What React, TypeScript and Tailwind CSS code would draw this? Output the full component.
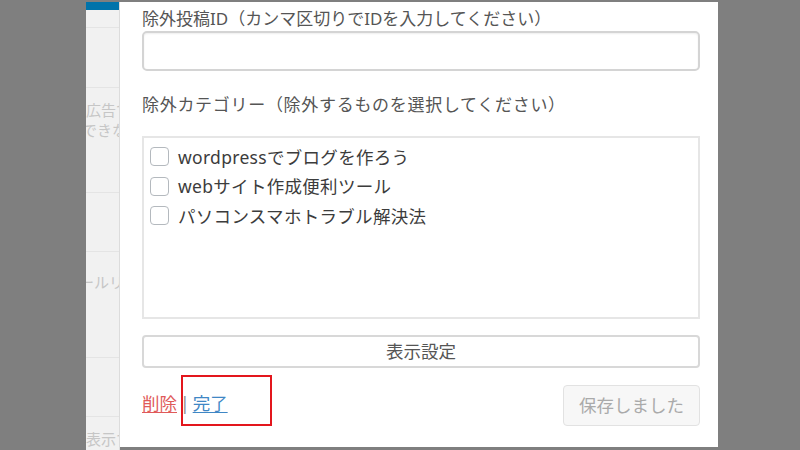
import React from 'react';

const categories = ['wordpressでブログを作ろう', 'webサイト作成便利ツール', 'パソコンスマホトラブル解決法'];

const SideStrip: React.FC = () => (
  <div className="w-[34px] shrink-0 h-full overflow-hidden bg-[#f1f1f1] border-r border-[#dcdcdc] flex flex-col text-[15px] leading-[20px] text-[#c6c6c6] whitespace-nowrap">
    <div className="h-[8px] bg-[#0073aa]" />
    <div className="h-[18px] border-b border-[#e4e4e4]" />
    <div className="h-[60px] border-b border-[#e4e4e4]" />
    <div className="h-[105px] border-b border-[#e4e4e4] pt-[12px]">
      <div>広告で</div>
      <div className="-ml-[4px]">できな</div>
    </div>
    <div className="h-[59px] border-b border-[#e4e4e4]" />
    <div className="h-[106px] border-b border-[#e4e4e4] pt-[20px]">
      <div className="-ml-[7px]">ールリス</div>
    </div>
    <div className="h-[59px] border-b border-[#e4e4e4]" />
    <div className="pt-[12px]">表示す</div>
  </div>
);

const Checkbox: React.FC<{ label: string }> = ({ label }) => (
  <label className="flex items-center h-[29.5px]">
    <span className="w-[19px] h-[19px] rounded-[4px] border-[1.5px] border-[#b4b9be] bg-white shrink-0" />
    <span className="ml-[9px] text-[17.5px] tracking-[0.3px] text-[#3c3c3c]">{label}</span>
  </label>
);

export default function App() {
  return (
    <div
      className="w-[800px] h-[450px] bg-[#7f7f7f] flex pt-[2px] overflow-hidden"
      style={{ fontFamily: '"Noto Sans", "Noto Sans CJK JP", sans-serif' }}
    >
      <div className="w-[86px] shrink-0" />
      <SideStrip />
      <div className="w-[598px] h-[445px] bg-white shrink-0 pl-[22px] pr-[18px] flex flex-col">
        <div className="mt-[6px] text-[17px] leading-[22px] text-[#555]">除外投稿ID（カンマ区切りでIDを入力してください）</div>
        <div className="mt-[1px] h-[40px] rounded-[5px] border-2 border-[#d4d4d4] shadow-[inset_0_1px_2px_rgba(0,0,0,0.07)]" />
        <div className="mt-[23px] text-[17px] leading-[22px] tracking-[0.7px] text-[#555]">除外カテゴリー（除外するものを選択してください）</div>
        <div className="mt-[20px] h-[183px] border-2 border-[#e6e6e6] pl-[6px] pt-[4px]">
          {categories.map((c) => (
            <Checkbox key={c} label={c} />
          ))}
        </div>
        <div className="mt-[16px] h-[33px] rounded-[4px] border-2 border-[#d8d8d8] bg-white flex items-center justify-center text-[17.5px] text-[#555]">
          表示設定
        </div>
        <div className="relative mt-[17px] flex items-start justify-between">
          <div className="mt-[7px] flex items-center text-[17.5px] leading-[22px]">
            <span className="text-[#e05a5a] underline underline-offset-2">削除</span>
            <span className="mx-[3px] text-[#8a8a8a]">|</span>
            <span className="text-[#3f87c5] underline underline-offset-2">完了</span>
          </div>
          <div className="absolute left-[39px] top-[-10px] w-[91px] h-[51px] border-2 border-[#e3161d]" />
          <div className="h-[41px] w-[137px] rounded-[4px] border border-[#e2e2e2] bg-[#f7f7f7] flex items-center justify-center text-[17.5px] text-[#aaa]">
            保存しました
          </div>
        </div>
      </div>
    </div>
  );
}
